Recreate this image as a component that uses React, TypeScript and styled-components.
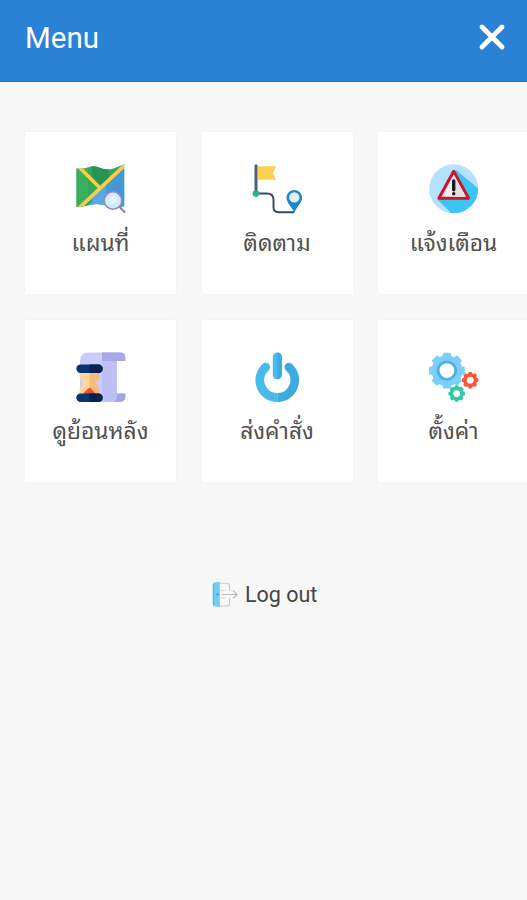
import React from "react";
import styled, { createGlobalStyle } from "styled-components";

const GlobalStyle = createGlobalStyle`
  * { box-sizing: border-box; }
  html, body { margin: 0; background: #f7f7f7; overflow: hidden; }
`;

const Screen = styled.div`
  width: 100%;
  height: 900px;
  overflow: hidden;
  background: #f7f7f7;
  color: #505050;
  font-family: Roboto, "Noto Sans Thai Looped", "Noto Sans Thai", "Noto Sans", sans-serif;
`;

const Header = styled.header`
  display: flex;
  align-items: center;
  justify-content: space-between;
  height: 82px;
  padding: 0 21px 5px 25px;
  background: #2b81d5;
  border-bottom: 1px solid #1c75c0;
  color: #fff;
`;

const Title = styled.h1`
  margin: 0;
  font-size: 29.5px;
  font-weight: 400;
  line-height: 36px;
`;

const CloseButton = styled.button`
  display: flex;
  padding: 0;
  margin-bottom: 3px;
  border: 0;
  background: none;
`;

const Grid = styled.main`
  display: grid;
  grid-template-columns: repeat(3, 151px);
  grid-auto-rows: 162px;
  gap: 25.5px;
  padding: 50px 0 0 25px;
`;

const Card = styled.section`
  display: flex;
  flex-direction: column;
  align-items: center;
  padding-top: 32px;
  background: #fff;
  box-shadow: 0 0 2px rgba(0, 0, 0, 0.05);
`;

const Label = styled.span`
  margin-top: 15px;
  font-size: 22.8px;
  line-height: 30px;
  white-space: nowrap;
`;

const Logout = styled.button`
  display: flex;
  align-items: center;
  gap: 7px;
  margin: 99px 0 0 212px;
  padding: 0;
  border: 0;
  background: none;
  color: #454545;
  font: 400 21.5px/28px Roboto, sans-serif;
`;

const Icon = ({ children }: { children: React.ReactNode }) => (
  <svg width="50" height="50" viewBox="0 0 50 50" fill="none">{children}</svg>
);

const MapIcon = () => (
  <Icon>
    <clipPath id="sheet">
      <path d="M.5 4.5Q7 5.5 12 3.5Q17 1 23 3.5Q32 7 39 4L48.2.3V42Q41 45 32 42Q20 38 10 42L.5 43Z" />
    </clipPath>
    <g clipPath="url(#sheet)">
      <path d="M0 0H50V50H0Z" fill="#34a65a" />
      <path d="M16 0H33V16L24 24L16 16Z" fill="#279451" />
      <path d="M0 0H12V38L0 50Z" fill="#3aaf60" />
      <path d="M50 0V50H4Z" fill="#4597d8" />
      <path d="M30 20V50H16V34Z" fill="#57a8e1" />
      <path d="M3 3L23 23M1 46L50 0" stroke="#f7cc4c" strokeWidth="3.7" />
    </g>
    <path d="M42.5 42L49 48.5" stroke="#8578bd" strokeWidth="2" />
    <circle cx="37" cy="36.5" r="8.7" fill="#d3ebfc" stroke="#948aca" strokeWidth="1.5" />
    <path d="M32.5 38L39 31.5M35 40L41 34" stroke="#eef8ff" strokeWidth="2" />
  </Icon>
);

const RouteIcon = () => (
  <Icon>
    <path d="M6 2.2H24L20.8 9L24 15.8H6Z" fill="#fbd150" />
    <path d="M4 1.7V28" stroke="#42637d" strokeWidth="3" strokeLinecap="round" />
    <path d="M4 29.5H15Q21.5 29.5 21.5 36V43Q21.5 48.3 27 48.3H42" stroke="#304b68" strokeWidth="1.9" />
    <circle cx="4" cy="29.6" r="3.3" fill="#24b98a" />
    <path d="M42.3 49C40 43 34.5 38.6 34.5 33.7a7.8 7.8 0 0 1 15.6 0C50.1 38.6 44.6 43 42.3 49Z" fill="#1989c7" />
    <circle cx="42.3" cy="33.4" r="5.2" fill="#e4eef3" />
  </Icon>
);

const AlertIcon = () => (
  <Icon>
    <clipPath id="disc"><circle cx="24.7" cy="24.8" r="24.5" /></clipPath>
    <g clipPath="url(#disc)">
      <path d="M0 0H50V50H0Z" fill="#b4e2fc" />
      <path d="M27 6L52 27V52H25L8.5 35.5Z" fill="#3ec3f5" />
    </g>
    <path d="M24.7 7.3L39.5 34.3H9.9Z" fill="#f5f2ee" stroke="#cf1428" strokeWidth="3" strokeLinejoin="round" />
    <path d="M25 11L37 32.8H25Z" fill="#e2e0dc" />
    <path d="M24.7 17V25.7" stroke="#151b20" strokeWidth="3.4" strokeLinecap="round" />
    <circle cx="24.7" cy="29.7" r="1.7" fill="#151b20" />
  </Icon>
);

const HistoryIcon = () => (
  <Icon>
    <path d="M4 9Q4 .5 12.5 .5H41V49.8H4Z" fill="#ccccfa" />
    <path d="M26 .5H44Q49.3 .5 49.3 5V9H40.7V41.5H49.3V45Q49.3 49.8 44 49.8H26Z" fill="#bfbff6" />
    <path d="M26 .5H44Q49.3 .5 49.3 5V9H26Z" fill="#a9a9e9" />
    <path d="M40.7 41.5H49.3V45Q49.3 49.8 44 49.8H37Q40.7 49 40.7 45Z" fill="#a3a3e5" />
    <path d="M3.5 19H23.7V25L20 31L23.7 37V43H3.5V37L7.3 31L3.5 25Z" fill="#ffd79d" />
    <path d="M13.6 19H23.7V25L20 31L23.7 37V43H13.6Z" fill="#f7ba7d" />
    <path d="M7 42Q10 38 13.5 35.5Q17 38 20 42Z" fill="#ee4f26" />
    <rect x=".3" y="12.5" width="26.4" height="8.5" rx="4.2" fill="#08346f" />
    <rect x=".3" y="41.4" width="26.4" height="8.5" rx="4.2" fill="#08346f" />
    <path d="M13.5 12.5H22.5a4.2 4.2 0 0 1 0 8.5H13.5ZM13.5 41.4H22.5a4.2 4.2 0 0 1 0 8.5H13.5Z" fill="#052452" />
  </Icon>
);

const PowerIcon = () => (
  <Icon>
    <path d="M13.7 15.2A17.4 17.4 0 0 0 25.3 45.6" stroke="#48bbeb" strokeWidth="8.8" />
    <path d="M25.3 45.6A17.4 17.4 0 0 0 36.9 15.2" stroke="#3eabdf" strokeWidth="8.8" />
    <circle cx="13.7" cy="15.2" r="4.4" fill="#48bbeb" />
    <circle cx="36.9" cy="15.2" r="4.4" fill="#3eabdf" />
    <path d="M25.3 5V22.7" stroke="#48bbeb" strokeWidth="9" strokeLinecap="round" />
    <path d="M25.3 .5a4.5 4.5 0 0 1 4.5 4.5V22.7a4.5 4.5 0 0 1-4.5 4.5Z" fill="#3eabdf" />
  </Icon>
);

const gearAngles = [0, 45, 90, 135, 180, 225, 270, 315];

const Gear = ({ x, y, r, hole, color }: { x: number; y: number; r: number; hole: number; color: string }) => (
  <g transform={`translate(${x} ${y})`}>
    <circle r={r * 0.86} fill={color} />
    {gearAngles.map((a) => (
      <rect key={a} x={-r * 0.23} y={-r} width={r * 0.46} height={r * 0.35} rx={r * 0.09} fill={color} transform={`rotate(${a})`} />
    ))}
    <circle r={hole} fill="#fff" />
  </g>
);

const SettingsIcon = () => (
  <Icon>
    <Gear x={17.9} y={18.6} r={17.9} hole={7} color="#7bcff9" />
    <circle cx="17.9" cy="18.6" r="8.8" fill="#fff" stroke="#4cafe5" strokeWidth="2.8" />
    <Gear x={41.2} y={28.2} r={8.2} hole={3.4} color="#f25a3b" />
    <Gear x={27.7} y={41.6} r={8.2} hole={3.4} color="#34c8a5" />
  </Icon>
);

const LogoutIcon = () => (
  <svg width="26" height="27" viewBox="0 0 26 27" fill="none">
    <path d="M7 2.2H15Q17.5 2.2 17.5 5V9.5M17.5 17V22Q17.5 25 15 25H7" stroke="#c6cbce" strokeWidth="1.1" />
    <path d="M8 9.5H14M8 17H14" stroke="#d9dddf" />
    <path d="M10 13.5H25M21 9.6L25 13.5L21 17.4" stroke="#b6bcc0" strokeWidth="1.2" />
    <path d="M.8 3Q.8 1.8 2 1.6L7.8.8V26L2 25.3Q.8 25.1.8 24Z" fill="#70cdf2" />
    <path d="M1.4 3V24.5" stroke="#4cb3dc" />
    <circle cx="5.5" cy="13.4" r="1.1" fill="#368fb7" />
  </svg>
);

const items = [
  { label: "แผนที่", Glyph: MapIcon },
  { label: "ติดตาม", Glyph: RouteIcon },
  { label: "แจ้งเตือน", Glyph: AlertIcon },
  { label: "ดูย้อนหลัง", Glyph: HistoryIcon },
  { label: "ส่งคำสั่ง", Glyph: PowerIcon },
  { label: "ตั้งค่า", Glyph: SettingsIcon },
];

export default function App() {
  return (
    <Screen>
      <GlobalStyle />
      <Header>
        <Title>Menu</Title>
        <CloseButton aria-label="Close">
          <svg width="28" height="28" viewBox="0 0 28 28">
            <path d="M4 4L24 24M24 4L4 24" stroke="#fff" strokeWidth="4.8" strokeLinecap="round" />
          </svg>
        </CloseButton>
      </Header>
      <Grid>
        {items.map(({ label, Glyph }) => (
          <Card key={label}>
            <Glyph />
            <Label>{label}</Label>
          </Card>
        ))}
      </Grid>
      <Logout>
        <LogoutIcon />
        Log out
      </Logout>
    </Screen>
  );
}
